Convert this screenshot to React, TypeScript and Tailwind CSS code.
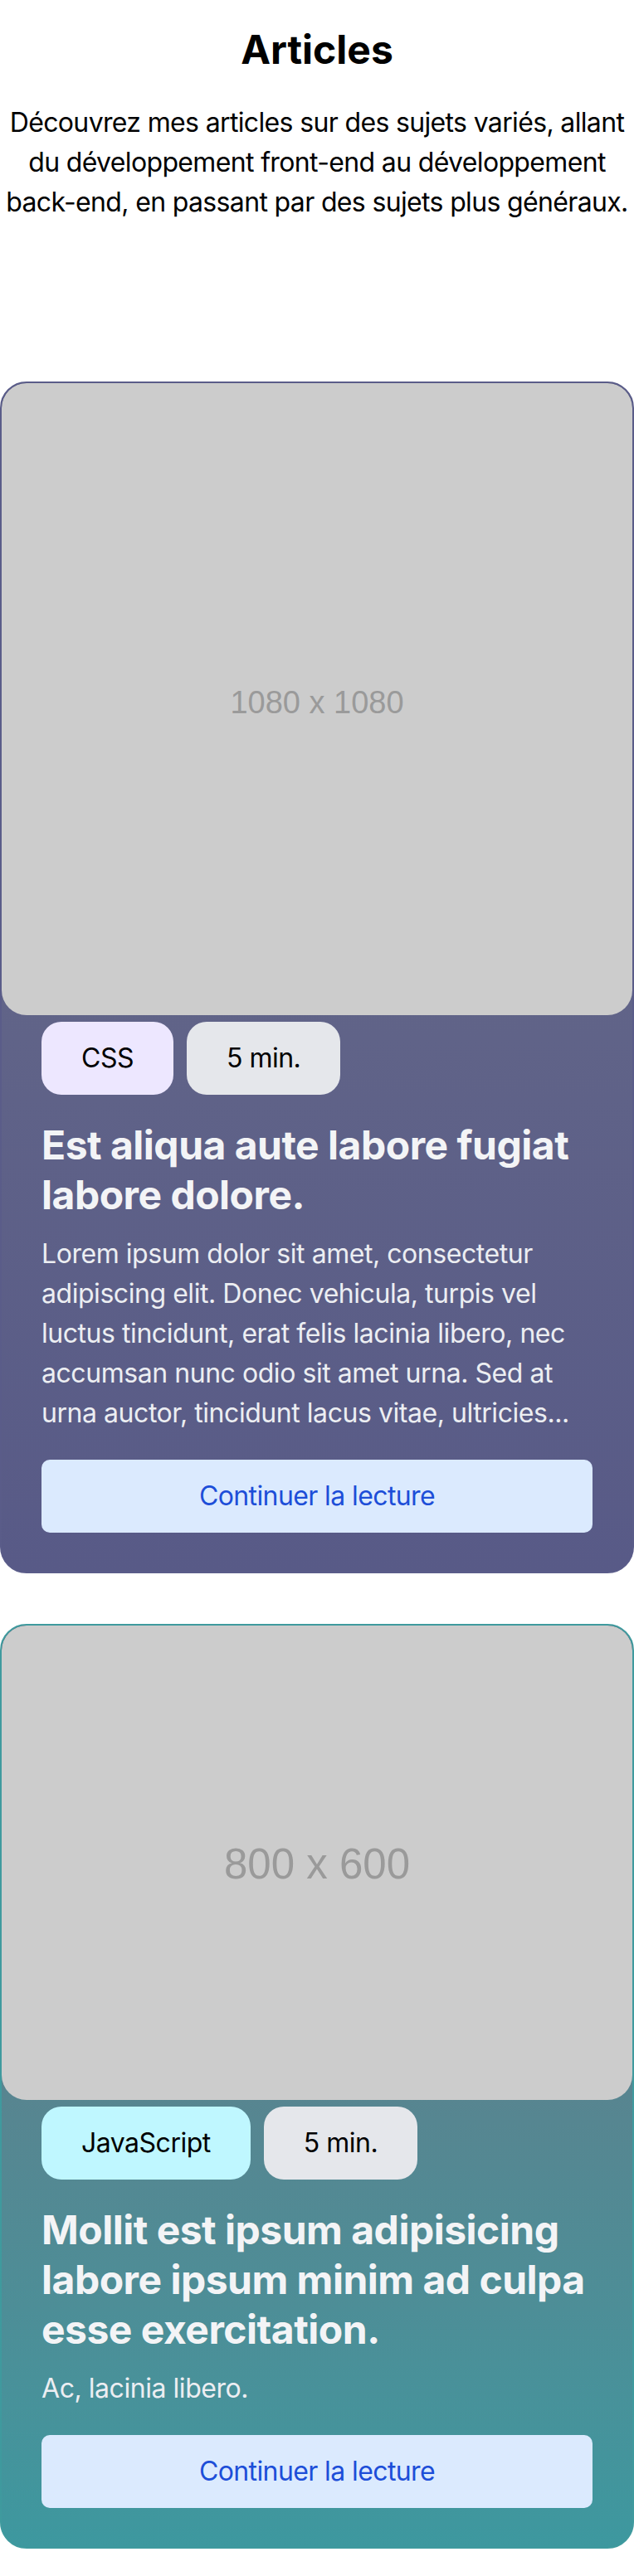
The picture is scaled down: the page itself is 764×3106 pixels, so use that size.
import React from "react";

type Article = {
    tag: string;
    tagColor: string;
    readTime: string;
    title: string;
    excerpt: string;
    image: string;
    imageClass: string;
    imageText: string;
    cardColor: string;
};

const ARTICLES: Article[] = [
    {
        tag: "CSS",
        tagColor: "bg-[#ede7ff]",
        readTime: "5 min.",
        title: "Est aliqua aute labore fugiat labore dolore.",
        excerpt:
            "Lorem ipsum dolor sit amet, consectetur adipiscing elit. Donec vehicula, turpis vel luctus tincidunt, erat felis lacinia libero, nec accumsan nunc odio sit amet urna. Sed at urna auctor, tincidunt lacus vitae, ultricies...",
        image: "1080 x 1080",
        imageClass: "h-[762px] pt-2",
        imageText: "text-[38px]",
        cardColor: "border-[#5a5c89] from-[#6a6e89] to-[#585a87]",
    },
    {
        tag: "JavaScript",
        tagColor: "bg-[#bff7ff]",
        readTime: "5 min.",
        title: "Mollit est ipsum adipisicing labore ipsum minim ad culpa esse exercitation.",
        excerpt: "Ac, lacinia libero.",
        image: "800 x 600",
        imageClass: "h-[572px] pt-1",
        imageText: "text-[51px]",
        cardColor: "border-[#3f9a9e] from-[#667181] to-[#3d989f]",
    },
];

function ArticleCard({ article }: { article: Article }) {
    return (
        <article className={`rounded-[32px] border-2 bg-linear-to-b pb-[47px] overflow-hidden ${article.cardColor}`}>
            {/* Cover placeholder */}
            <div className={`${article.imageClass} w-full rounded-[30px] bg-[#cccccc] flex items-center justify-center`}>
                <span className={`font-['Liberation_Sans',Arial,sans-serif] text-[#9a9a9a] ${article.imageText}`}>
                    {article.image}
                </span>
            </div>

            <div className="px-12 mt-2">
                {/* Tags */}
                <div className="flex gap-4">
                    <span className={`px-12 py-5 rounded-[24px] text-[32px] leading-[48px] tracking-[-0.5px] text-black ${article.tagColor}`}>
                        {article.tag}
                    </span>
                    <span className="px-12 py-5 rounded-[24px] bg-[#e5e7eb] text-[32px] leading-[48px] tracking-[-0.5px] text-black">
                        {article.readTime}
                    </span>
                </div>

                <h2 className="mt-[31px] text-[48px] leading-[60px] font-bold tracking-[-0.5px] text-[#f3f4f6]">
                    {article.title}
                </h2>
                <p className="mt-[17px] text-[32px] leading-[48px] tracking-[-0.45px] text-[#eceef2]">
                    {article.excerpt}
                </p>

                <a
                    href="#"
                    className="mt-8 flex h-[88px] items-center justify-center rounded-[10px] bg-[#dbeafe] text-[32px] tracking-[-0.6px] text-[#1d4ed8]"
                >
                    Continuer la lecture
                </a>
            </div>
        </article>
    );
}

export default function App() {
    return (
        <div className="min-h-screen bg-white font-[Inter,sans-serif] pb-8">
            <header className="pt-[28px] text-center">
                <h1 className="text-[48px] leading-[64px] font-bold text-black">Articles</h1>
                <p className="mt-8 text-[32px] leading-[48px] tracking-[-0.65px] text-black">
                    Découvrez mes articles sur des sujets variés, allant du développement front-end au développement
                    back-end, en passant par des sujets plus généraux.
                </p>
            </header>

            <div className="mt-[192px] flex flex-col gap-[61px]">
                {ARTICLES.map((article) => (
                    <ArticleCard key={article.title} article={article} />
                ))}
            </div>
        </div>
    );
}
